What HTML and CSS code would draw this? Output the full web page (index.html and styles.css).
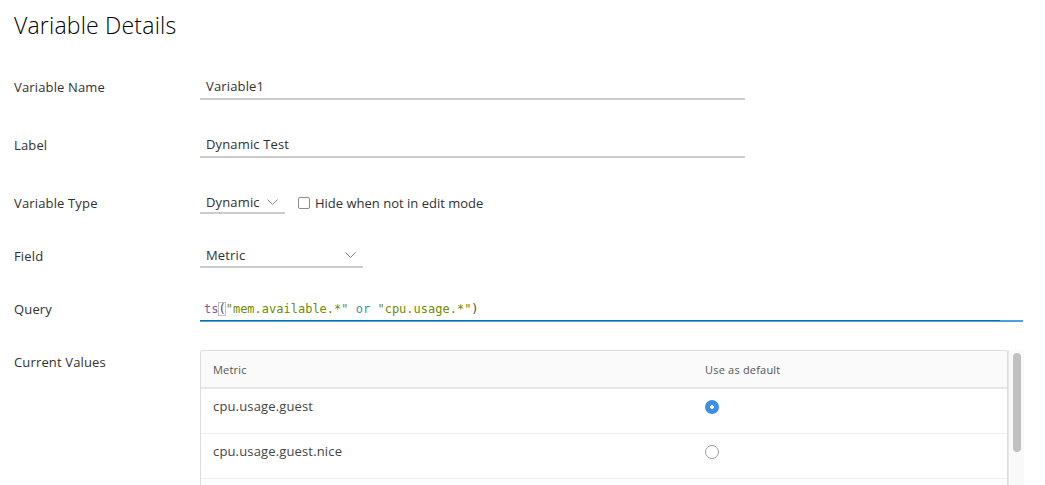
FILE: index.html
```html
<!DOCTYPE html>
<html>
<head>
<meta charset="utf-8">
<link rel="stylesheet" href="styles.css">
</head>
<body>
<div class="page">
  <h1 class="title">Variable Details</h1>
  <div class="form">
    <div class="row row-58">
      <div class="label">Variable Name</div>
      <div class="field"><div class="input">Variable1</div></div>
    </div>
    <div class="row row-58">
      <div class="label">Label</div>
      <div class="field"><div class="input">Dynamic Test</div></div>
    </div>
    <div class="row row-58">
      <div class="label">Variable Type</div>
      <div class="field">
        <div class="select select-type"><span>Dynamic</span><svg class="chev" width="11" height="6" viewBox="0 0 11 6"><path d="M0.5 0.5 L5.5 5.5 L10.5 0.5" fill="none" stroke="#8a8a8a" stroke-width="1"/></svg></div>
        <label class="check"><span class="box"></span>Hide when not in edit mode</label>
      </div>
    </div>
    <div class="row row-48">
      <div class="label">Field</div>
      <div class="field"><div class="select select-field"><span>Metric</span><svg class="chev" width="11" height="6" viewBox="0 0 11 6"><path d="M0.5 0.5 L5.5 5.5 L10.5 0.5" fill="none" stroke="#8a8a8a" stroke-width="1"/></svg></div></div>
    </div>
    <div class="row row-58">
      <div class="label">Query</div>
      <div class="field">
        <div class="editor-wrap">
          <div class="editor"><span class="fn">ts</span><span class="paren">(</span><span class="str">"mem.available.*"</span> <span class="kw">or</span> <span class="str">"cpu.usage.*"</span><span class="pl">)</span></div>
        </div>
      </div>
    </div>
    <div class="row row-values">
      <div class="label label-top">Current Values</div>
      <div class="field field-top">
        <div class="grid-wrap">
          <div class="grid">
            <div class="grid-head">
              <div class="c1">Metric</div>
              <div class="c2">Use as default</div>
            </div>
            <div class="grid-row">
              <div class="c1">cpu.usage.guest</div>
              <div class="c2"><span class="radio on"></span></div>
            </div>
            <div class="grid-row">
              <div class="c1">cpu.usage.guest.nice</div>
              <div class="c2"><span class="radio"></span></div>
            </div>
            <div class="grid-row"></div>
          </div>
          <div class="track"><div class="thumb"></div></div>
        </div>
      </div>
    </div>
  </div>
</div>
</body>
</html>
```

FILE: styles.css
```css
html, body {
  margin: 0;
  padding: 0;
  background: #fff;
  overflow: hidden;
  height: 485px;
}
body {
  font-family: "Open Sans", "Noto Sans", sans-serif;
  color: #313131;
}
.page {
  padding: 0 0 0 14px;
}
.title {
  margin: 0;
  padding-top: 9px;
  height: 58px;
  box-sizing: border-box;
  font-size: 23px;
  line-height: 32px;
  font-weight: 300;
  color: #000;
  letter-spacing: 0.2px;
}
.form {
  display: flex;
  flex-direction: column;
}
.row {
  display: flex;
  align-items: center;
}
.row-58 { height: 58px; }
.row-48 { height: 48px; }
.row-values {
  align-items: flex-start;
  padding-top: 12px;
}
.label {
  width: 186px;
  font-size: 13px;
  line-height: 18px;
  letter-spacing: 0.15px;
}
.label-top {
  padding-top: 3px;
}
.field {
  display: flex;
  align-items: center;
}
.input {
  width: 539px;
  height: 24px;
  line-height: 24px;
  padding-left: 6px;
  font-size: 13px;
  letter-spacing: 0.15px;
  border-bottom: 2px solid #cccccc;
}
.select {
  display: flex;
  align-items: center;
  justify-content: space-between;
  height: 22px;
  padding: 0 7px 0 6px;
  font-size: 13px;
  letter-spacing: 0.15px;
  border-bottom: 2px solid #cccccc;
  box-sizing: border-box;
}
.select-type { width: 85px; height: 22px; }
.select-field { width: 163px; height: 24px; }
.chev { display: block; }
.check {
  display: flex;
  align-items: center;
  margin-left: 13px;
  font-size: 13px;
}
.box {
  width: 10px;
  height: 10px;
  border: 1px solid #8c8c8c;
  border-radius: 2px;
  margin-right: 5px;
}
.editor-wrap {
  width: 823px;
  border-bottom: 2px solid #4aa3dc;
}
.editor {
  width: 800px;
  height: 24px;
  padding-left: 4px;
  box-sizing: border-box;
  font-family: "DejaVu Sans Mono", "Liberation Mono", monospace;
  font-size: 12px;
  line-height: 24px;
  color: #4d4d4c;
  border-bottom: 1px solid #0f6fab;
  margin-bottom: -1px;
  white-space: pre;
}
.fn { color: #8959a8; }
.str { color: #718c00; }
.kw { color: #3e999f; }
.pl { color: #4d4d4c; }
.paren {
  outline: 1px solid #c0c0c0;
  outline-offset: -1px;
  color: #4d4d4c;
}
.field-top { align-items: flex-start; }
.grid-wrap {
  display: flex;
  width: 824px;
}
.grid {
  width: 808px;
  border: 1px solid #dddddd;
  border-radius: 3px 3px 0 0;
  border-bottom: none;
  box-sizing: border-box;
  height: 140px;
  overflow: hidden;
}
.grid-head {
  display: flex;
  align-items: center;
  height: 36px;
  background: #fafafa;
  border-bottom: 2px solid #e6e6e6;
  font-size: 11px;
  color: #565656;
  letter-spacing: 0.2px;
}
.grid-row {
  display: flex;
  align-items: flex-start;
  height: 45px;
  padding-top: 9px;
  box-sizing: border-box;
  border-bottom: 1px solid #eeeeee;
  font-size: 13px;
  line-height: 17px;
  color: #454545;
  letter-spacing: 0.15px;
}
.c1 {
  width: 492px;
  padding-left: 12px;
}
.c2 {
  display: flex;
  align-items: center;
  height: 17px;
}
.radio {
  width: 12px;
  height: 12px;
  border: 1px solid #9a9a9a;
  border-radius: 50%;
  box-sizing: content-box;
  display: block;
}
.radio.on {
  width: 14px;
  height: 14px;
  border: none;
  background: radial-gradient(circle, #ffffff 0 1.6px, #3b8fe9 2.2px);
}
.track {
  width: 16px;
  height: 140px;
  background: #f9f9f9;
  border-left: 1px solid #e6e6e6;
  box-sizing: border-box;
  padding: 3px 3px 0 4px;
}
.thumb {
  width: 8px;
  height: 99px;
  background: #c1c1c1;
  border-radius: 4px;
}
```
